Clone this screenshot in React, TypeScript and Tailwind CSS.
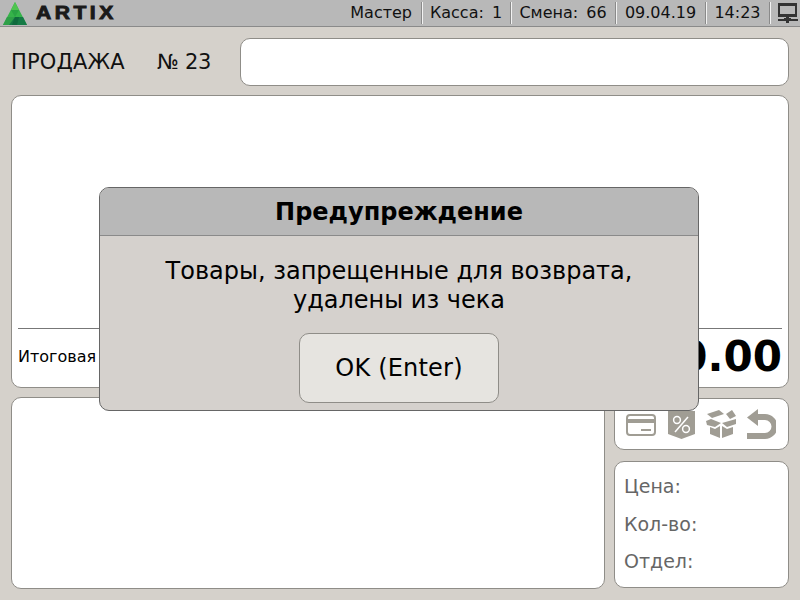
import React from 'react';

const panel = 'bg-white border border-[#8f8d88] rounded-[10px]';

function StatusItem({ children, className }: { children: React.ReactNode; className: string }) {
  return <div className={`flex items-center justify-center h-[22px] border-r border-[#8a8a8a] shadow-[1px_0_0_#f2f2f2] ${className}`}>{children}</div>;
}

function Logo() {
  return (
    <svg width="24" height="23" viewBox="0 0 24 23">
      <polygon points="12,0 24,23 0,23" fill="#35b34a" />
      <polygon points="12,0 16,8 8,8" fill="#4fc44f" />
      <polygon points="8,8 16,8 12,15" fill="#2aa344" />
      <polygon points="4,15 12,15 8,23 0,23" fill="#2f9f48" />
      <polygon points="12,15 20,15 24,23 6,23" fill="#157a45" />
      <polygon points="12,15 16,15 14,23 9,23" fill="#0f6a3d" />
    </svg>
  );
}

function NetworkIcon() {
  return (
    <svg width="20" height="20" viewBox="0 0 20 20" fill="#333">
      <path d="M0 0h19v14H0z M2 3v8h15V3z" fillRule="evenodd" />
      <rect x="8" y="14" width="3" height="6" />
      <rect x="0" y="16" width="20" height="2" />
      <rect x="6" y="15" width="7" height="1" />
    </svg>
  );
}

function CardIcon() {
  return (
    <svg width="30" height="22" viewBox="0 0 30 22" className="mt-[1px]">
      <rect x="1" y="1" width="28" height="20" rx="3" fill="none" stroke="#a09d94" strokeWidth="2" />
      <rect x="1" y="5" width="28" height="4" fill="#a09d94" />
      <rect x="15" y="15" width="10" height="2" fill="#a09d94" />
    </svg>
  );
}

function PercentIcon() {
  return (
    <svg width="27" height="28" viewBox="0 0 27 28" className="mt-[1px]">
      <polygon points="0,0 27,0 27,23 13.5,28 0,23" fill="#a09d94" />
      <circle cx="9" cy="9" r="3.4" fill="none" stroke="#fff" strokeWidth="1.5" />
      <circle cx="18" cy="18" r="3.4" fill="none" stroke="#fff" strokeWidth="1.5" />
      <path d="M20 6 7 21" stroke="#fff" strokeWidth="1.5" />
    </svg>
  );
}

function BoxIcon() {
  return (
    <svg width="30" height="28" viewBox="0 0 30 28" fill="#a09d94" className="-mx-[1px]">
      <polygon points="1,4 13,0 18,4 6,8" />
      <polygon points="20,4 26,0 30,6 24,9" />
      <polygon points="0,11 5,9 15,13 9,17 1,15" />
      <polygon points="16,13 30,9 30,14 21,17" />
      <polygon points="4,17 9,19 14,16 14,28 4,24" />
      <polygon points="16,16 21,19 27,17 27,24 16,28" />
    </svg>
  );
}

function BackIcon() {
  return (
    <svg width="29" height="30" viewBox="0 0 29 30" fill="#a09d94">
      <polygon points="11,0 11,17 0,8.500" />
      <path d="M10 5h8a12.500 12.500 0 0 1 0 25H0v-6h18a6.500 6.500 0 0 0 0-13h-8z" />
    </svg>
  );
}

export default function App() {
  return (
    <div className="relative w-[800px] h-[600px] overflow-hidden bg-[#d5d1cb] text-black font-['DejaVu_Sans',sans-serif]">
      <div className="flex items-center justify-between h-[27px] bg-[#b8b8b8] border-b border-[#8a8a8a]">
        <div className="flex items-center pl-[3px]">
          <Logo />
          <span className="ml-[9px] origin-left scale-x-[1.17] font-['Liberation_Sans',sans-serif] font-bold text-[18px] tracking-[3px] text-[#1a1a1a] [-webkit-text-stroke:0.9px_#1a1a1a]">ARTIX</span>
        </div>
        <div className="flex items-center text-[16px] text-[#111] [word-spacing:3px]">
          <StatusItem className="pr-[9px]">Мастер</StatusItem>
          <StatusItem className="w-[89px]">Касса: 1</StatusItem>
          <StatusItem className="w-[105px]">Смена: 66</StatusItem>
          <StatusItem className="w-[90px]">09.04.19</StatusItem>
          <StatusItem className="w-[64px]">14:23</StatusItem>
          <div className="flex items-center pl-[8px] pr-[2px]"><NetworkIcon /></div>
        </div>
      </div>

      <div className="flex items-center h-[48px] mt-[11px] pl-[11px] pr-[11px]">
        <span className="w-[146px] pt-[2px] text-[21px] tracking-[0.15px] text-[#111]">ПРОДАЖА</span>
        <span className="w-[83px] pt-[2px] text-[21px] tracking-[-0.3px] text-[#111]">№ 23</span>
        <div className={`${panel} flex-1 h-[48px]`} />
      </div>

      <div className={`${panel} flex flex-col h-[293px] mx-[11px] mt-[9px] px-[6px]`}>
        <div className="mt-[232px] border-t border-[#777]" />
        <div className="flex items-center justify-between h-[55px] ">
          <span className="text-[16px]">Итоговая</span>
          <span className="text-[42px] font-bold leading-none">0.00</span>
        </div>
      </div>

      <div className="flex gap-[9px] mx-[11px] mt-[9px]">
        <div className={`${panel} flex-1 h-[192px]`} />
        <div className="flex flex-col gap-[11px] w-[175px] mt-[1px]">
          <div className={`${panel} flex items-center h-[52px] pl-[11px] gap-[12px]`}>
            <CardIcon />
            <PercentIcon />
            <BoxIcon />
            <BackIcon />
          </div>
          <div className={`${panel} flex flex-col h-[127px] pl-[9px] pt-[10px] text-[19px] text-[#666] gap-[9px]`}>
            <span>Цена:</span>
            <span>Кол-во:</span>
            <span>Отдел:</span>
          </div>
        </div>
      </div>

      <div className="absolute left-[99px] top-[187px] w-[600px] h-[224px] flex flex-col overflow-hidden bg-[#d5d1cd] border border-[#666] rounded-[10px]">
        <div className="flex items-center justify-center h-[48px] bg-[#b8b8b8] border-b border-[#8a8a8a] text-[24px] font-bold">Предупреждение</div>
        <div className="flex flex-col items-center pt-[21px] text-[24px] leading-[29px]">
          <span>Товары, запрещенные для возврата,</span>
          <span>удалены из чека</span>
        </div>
        <button className="self-center mt-[18px] w-[200px] h-[70px] bg-[#e6e4e0] border border-[#8f8d88] rounded-[10px] text-[24px] tracking-[0.2px]">OK (Enter)</button>
      </div>
    </div>
  );
}
